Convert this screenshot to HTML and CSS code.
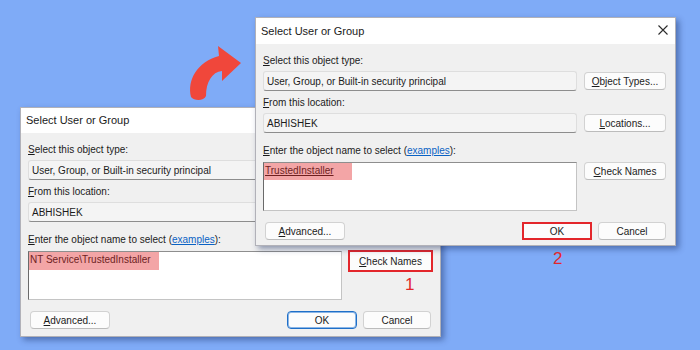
FILE: index.html
```html
<!DOCTYPE html>
<html lang="en">
<head>
    <meta charset="UTF-8">
    <meta name="viewport" content="width=device-width, initial-scale=1.0">
    <title>Select User or Group - TrustedInstaller</title>
    <link rel="stylesheet" href="styles.css">
</head>
<body>
    <div class="canvas">
        <svg class="arrow" viewBox="185 42 60 62" width="60" height="62">
            <path d="M191,97 C187,80 197,62 219,56 L218,46 L241,63 L222,81 L222,71 C212,72 206,82 206,96 C204,101 194,101 191,97 Z" fill="#f0473b"/>
        </svg>

        <div class="dialog dialog-back">
            <div class="titlebar">Select User or Group</div>
            <div class="dialog-body">
                <div class="label"><u>S</u>elect this object type:</div>
                <div class="row">
                    <div class="field">User, Group, or Built-in security principal</div>
                    <button class="btn"><u>O</u>bject Types...</button>
                </div>
                <div class="label"><u>F</u>rom this location:</div>
                <div class="row">
                    <div class="field">ABHISHEK</div>
                    <button class="btn"><u>L</u>ocations...</button>
                </div>
                <div class="label label-names"><u>E</u>nter the object name to select (<a href="#">examples</a>):</div>
                <div class="row row-names">
                    <div class="names"><span class="picked picked-long">NT Service\TrustedInstaller</span></div>
                    <button class="btn btn-marked"><u>C</u>heck Names</button>
                </div>
                <div class="actions">
                    <button class="btn btn-advanced"><u>A</u>dvanced...</button>
                    <button class="btn btn-ok btn-default">OK</button>
                    <button class="btn btn-cancel">Cancel</button>
                </div>
            </div>
        </div>

        <div class="dialog dialog-front">
            <div class="titlebar">
                Select User or Group
                <svg class="close" viewBox="0 0 10 10" width="10" height="10">
                    <path d="M0.5,0.5 L9.5,9.5 M9.5,0.5 L0.5,9.5" stroke="#2b2b2b" stroke-width="1.1"/>
                </svg>
            </div>
            <div class="dialog-body">
                <div class="label"><u>S</u>elect this object type:</div>
                <div class="row">
                    <div class="field">User, Group, or Built-in security principal</div>
                    <button class="btn"><u>O</u>bject Types...</button>
                </div>
                <div class="label"><u>F</u>rom this location:</div>
                <div class="row">
                    <div class="field">ABHISHEK</div>
                    <button class="btn"><u>L</u>ocations...</button>
                </div>
                <div class="label label-names"><u>E</u>nter the object name to select (<a href="#">examples</a>):</div>
                <div class="row row-names">
                    <div class="names"><span class="picked picked-short"><u>TrustedInstaller</u></span></div>
                    <button class="btn"><u>C</u>heck Names</button>
                </div>
                <div class="actions">
                    <button class="btn btn-advanced"><u>A</u>dvanced...</button>
                    <button class="btn btn-ok btn-red">OK</button>
                    <button class="btn btn-cancel">Cancel</button>
                </div>
            </div>
        </div>

        <span class="step step-one">1</span>
        <span class="step step-two">2</span>
    </div>
</body>
</html>
```

FILE: styles.css
```css
body {
    margin: 0;
    font-family: "Liberation Sans", Arial, sans-serif;
    font-size: 10px;
    color: #1b1b1b;
}
.canvas {
    position: relative;
    width: 700px;
    height: 350px;
    overflow: hidden;
    background-color: #7fabf7;
}
.arrow {
    position: absolute;
    left: 185px;
    top: 42px;
}

/* dialog windows */
.dialog {
    position: absolute;
    width: 421px;
    background-color: #f0f0f0;
    border: 1px solid rgba(60, 60, 80, 0.35);
    box-sizing: border-box;
    box-shadow: 3px 3px 6px rgba(20, 40, 90, 0.45);
}
.dialog-back {
    left: 20px;
    top: 107px;
}
.dialog-front {
    left: 255px;
    top: 17px;
}
.titlebar {
    position: relative;
    height: 25px;
    line-height: 25px;
    padding-left: 5px;
    background-color: #ffffff;
    font-size: 11px;
    color: #1a1a1a;
}
.dialog-front .titlebar {
    height: 26px;
    line-height: 26px;
}
.close {
    position: absolute;
    right: 7px;
    top: 7px;
}
.dialog-body {
    padding: 5px 9px 5px 7px;
}
.dialog-back .dialog-body {
    padding-bottom: 7px;
}
.label {
    height: 14px;
    line-height: 14px;
    margin: 5px 0 3px;
}
.label-names {
    margin: 11px 0 4px;
}
.label a {
    color: #0a62c4;
}
.row {
    display: grid;
    grid-template-columns: 314px 82px;
    column-gap: 7px;
    align-items: center;
}
.row-names {
    align-items: start;
}
.field {
    height: 20px;
    line-height: 19px;
    padding-left: 3px;
    box-sizing: border-box;
    background-color: #f4f4f4;
    border: 1px solid #dedede;
    border-bottom-color: #8d8d8d;
    border-radius: 3px;
}
.names {
    height: 49px;
    background-color: #ffffff;
    border: 1px solid #c4c4c4;
    border-top-color: #8e8e8e;
    border-left-color: #6a6a6a;
    box-sizing: border-box;
}
.picked {
    display: inline-block;
    height: 17px;
    line-height: 16px;
    padding-left: 1px;
    background-color: #f3a5a6;
    color: #6e1f1f;
}
.picked-long {
    width: 129px;
    height: 18px;
}
.picked-short {
    width: 87px;
}

/* buttons */
.btn {
    height: 18px;
    padding: 0;
    font-family: inherit;
    font-size: 10px;
    color: #1b1b1b;
    background-color: #fcfcfc;
    border: 1px solid #d2d2d2;
    border-bottom-color: #bcbcbc;
    border-radius: 4px;
}
.btn-marked {
    width: 85px;
    height: 22px;
    margin: -1px 0 0 -1px;
    border: 2px solid #e3262b;
    border-radius: 0;
}
.actions {
    display: flex;
    align-items: center;
    margin-top: 11px;
}
.btn-advanced {
    width: 80px;
    margin-left: 2px;
}
.btn-ok {
    width: 70px;
    margin-left: auto;
}
.btn-cancel {
    width: 68px;
    margin-left: 6px;
}
.btn-default {
    border: 1px solid #1f6fc8;
    box-shadow: inset 0 0 0 1px #8bb6e6;
}
.btn-red {
    border: 2px solid #e3262b;
    border-radius: 0;
}

/* step numbers */
.step {
    position: absolute;
    font-size: 17px;
    line-height: 17px;
    color: #e3262b;
}
.step-one {
    left: 405px;
    top: 276px;
}
.step-two {
    left: 553px;
    top: 250px;
}
```
